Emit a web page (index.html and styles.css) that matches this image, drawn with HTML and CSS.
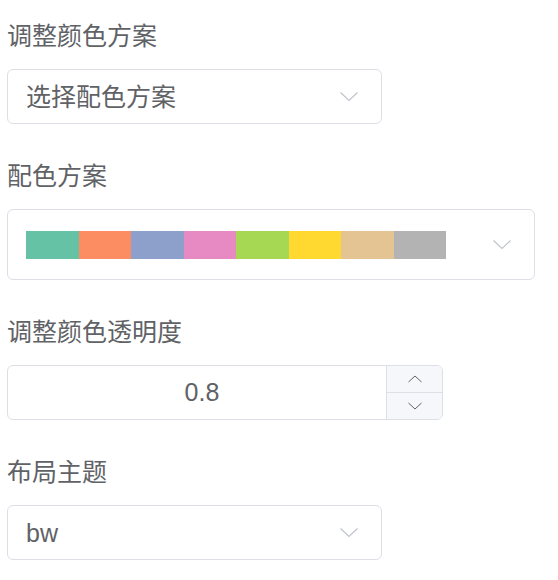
FILE: index.html
```html
<!DOCTYPE html>
<html lang="zh">
<head>
<meta charset="utf-8">
<title>配色</title>
<link rel="stylesheet" href="styles.css">
</head>
<body>
<div class="form">
  <div class="item">
    <div class="label">调整颜色方案</div>
    <div class="select w-small">
      <span class="value">选择配色方案</span>
      <svg class="arrow" width="18" height="10" viewBox="0 0 18 10"><polyline points="0.5,0.5 9,8.5 17.5,0.5" fill="none" stroke="#c0c4cc" stroke-width="1.2"/></svg>
    </div>
  </div>
  <div class="item">
    <div class="label">配色方案</div>
    <div class="select w-wide tall">
      <div class="palette">
        <span class="sw c1"></span><span class="sw c2"></span><span class="sw c3"></span><span class="sw c4"></span><span class="sw c5"></span><span class="sw c6"></span><span class="sw c7"></span><span class="sw c8"></span>
      </div>
      <svg class="arrow" width="18" height="10" viewBox="0 0 18 10"><polyline points="0.5,0.5 9,8.5 17.5,0.5" fill="none" stroke="#c0c4cc" stroke-width="1.2"/></svg>
    </div>
  </div>
  <div class="item">
    <div class="label">调整颜色透明度</div>
    <div class="number">
      <div class="num-value">0.8</div>
      <div class="controls">
        <div class="ctl ctl-up"><svg width="14" height="8" viewBox="0 0 14 8"><polyline points="0.5,7 7,1 13.5,7" fill="none" stroke="#606266" stroke-width="1"/></svg></div>
        <div class="ctl"><svg width="14" height="8" viewBox="0 0 14 8"><polyline points="0.5,1 7,7 13.5,1" fill="none" stroke="#606266" stroke-width="1"/></svg></div>
      </div>
    </div>
  </div>
  <div class="item">
    <div class="label">布局主题</div>
    <div class="select w-small">
      <span class="value">bw</span>
      <svg class="arrow" width="18" height="10" viewBox="0 0 18 10"><polyline points="0.5,0.5 9,8.5 17.5,0.5" fill="none" stroke="#c0c4cc" stroke-width="1.2"/></svg>
    </div>
  </div>
</div>
</body>
</html>
```
FILE: styles.css
```css
html, body {
  margin: 0;
  padding: 0;
  background: #ffffff;
}
body {
  font-family: "Liberation Sans", "Noto Sans CJK SC", sans-serif;
  color: #606266;
}
.form {
  padding: 19px 0 0 7px;
  display: flex;
  flex-direction: column;
  gap: 35px;
}
.item {
  display: flex;
  flex-direction: column;
  gap: 16px;
}
.label {
  font-size: 25px;
  line-height: 34px;
  color: #606266;
}
.select {
  box-sizing: border-box;
  height: 55px;
  border: 1px solid #dcdfe6;
  border-radius: 6px;
  display: flex;
  align-items: center;
  justify-content: space-between;
  padding: 0 23px 0 18px;
  font-size: 25px;
}
.w-small { width: 375px; }
.w-wide { width: 528px; }
.tall { height: 71px; }
.value { line-height: 30px; }
.arrow { display: block; }
.palette {
  display: flex;
  height: 28px;
}
.sw {
  width: 52.5px;
  height: 28px;
}
.c1 { background: #66c2a5; }
.c2 { background: #fc8d62; }
.c3 { background: #8da0cb; }
.c4 { background: #e78ac3; }
.c5 { background: #a6d854; }
.c6 { background: #ffd92f; }
.c7 { background: #e5c494; }
.c8 { background: #b3b3b3; }
.number {
  box-sizing: border-box;
  width: 436px;
  height: 55px;
  border: 1px solid #dcdfe6;
  border-radius: 6px;
  display: flex;
  overflow: hidden;
}
.num-value {
  flex: 1;
  display: flex;
  align-items: center;
  justify-content: center;
  padding-left: 10px;
  font-size: 25px;
}
.controls {
  width: 55px;
  border-left: 1px solid #dcdfe6;
  background: #f5f7fa;
  display: flex;
  flex-direction: column;
}
.ctl {
  flex: 1;
  display: flex;
  align-items: center;
  justify-content: center;
}
.ctl svg { display: block; }
.ctl-up {
  border-bottom: 1px solid #dcdfe6;
}
```
